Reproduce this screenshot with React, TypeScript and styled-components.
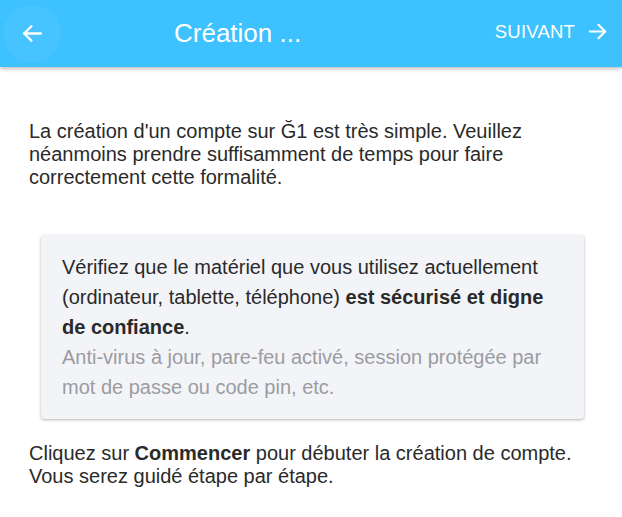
import React from "react";
import styled, { createGlobalStyle } from "styled-components";

const GlobalStyle = createGlobalStyle`
  html, body {
    margin: 0;
    padding: 0;
    background: #ffffff;
    font-family: "Liberation Sans", Arial, sans-serif;
  }
`;

const Page = styled.div`
  width: 622px;
  min-height: 517px;
  background: #ffffff;
`;

const Toolbar = styled.header`
  height: 67px;
  background: #3dc1ff;
  display: flex;
  align-items: center;
  box-shadow: 0 2px 4px rgba(0, 0, 0, 0.25);
  position: relative;
  z-index: 1;
`;

const BackButton = styled.button`
  width: 58px;
  height: 58px;
  margin: 0 0 0 3px;
  border: none;
  border-radius: 50%;
  background: rgba(255, 255, 255, 0.05);
  display: flex;
  align-items: center;
  justify-content: center;
  padding: 0;
`;

const Title = styled.h1`
  flex: 1;
  margin: 0 0 0 113px;
  font-size: 26px;
  font-weight: 400;
  color: #ffffff;
`;

const NextButton = styled.button`
  border: none;
  background: transparent;
  color: #ffffff;
  font-family: inherit;
  font-size: 18.5px;
  letter-spacing: 0.2px;
  display: flex;
  align-items: center;
  gap: 11px;
  padding: 0;
  margin: -4px 13px 0 0;
`;

const Content = styled.main`
  padding: 53px 29px 20px 29px;
`;

const Paragraph = styled.p`
  margin: 0;
  font-size: 20px;
  line-height: 23px;
  color: #2a2a2a;
`;

const Card = styled.div`
  margin: 46px 9px 23px 12px;
  padding: 17px 21px;
  background: #f3f4f8;
  border-radius: 4px;
  box-shadow: 0 1px 3px rgba(0, 0, 0, 0.3);
`;

const CardText = styled.p<{ $muted?: boolean }>`
  margin: 0;
  font-size: 20px;
  line-height: 30px;
  color: ${(p) => (p.$muted ? "#9b9ca1" : "#2a2a2a")};
`;

const Arrow = ({ dir, size }: { dir: "left" | "right"; size: number }) => (
  <svg width={size} height={size} viewBox="0 0 24 24" fill="none" stroke="#fff" strokeWidth="2.2" strokeLinecap="round" strokeLinejoin="round">
    {dir === "left" ? (
      <>
        <path d="M20 12H4" />
        <path d="M11 5l-7 7 7 7" />
      </>
    ) : (
      <>
        <path d="M4 12h16" />
        <path d="M13 5l7 7-7 7" />
      </>
    )}
  </svg>
);

const App = () => {
  return (
    <Page>
      <GlobalStyle />
      <Toolbar>
        <BackButton>
          <Arrow dir="left" size={25} />
        </BackButton>
        <Title>Création ...</Title>
        <NextButton>
          SUIVANT
          <Arrow dir="right" size={23} />
        </NextButton>
      </Toolbar>
      <Content>
        <Paragraph>
          La création d'un compte sur Ğ1 est très simple. Veuillez néanmoins prendre suffisamment de temps pour faire
          correctement cette formalité.
        </Paragraph>
        <Card>
          <CardText>
            Vérifiez que le matériel que vous utilisez actuellement (ordinateur, tablette, téléphone){" "}
            <b>est sécurisé et digne de confiance</b>.
          </CardText>
          <CardText $muted>Anti-virus à jour, pare-feu activé, session protégée par mot de passe ou code pin, etc.</CardText>
        </Card>
        <Paragraph>
          Cliquez sur <b>Commencer</b> pour débuter la création de compte.
          <br />
          Vous serez guidé étape par étape.
        </Paragraph>
      </Content>
    </Page>
  );
};

export default App;
